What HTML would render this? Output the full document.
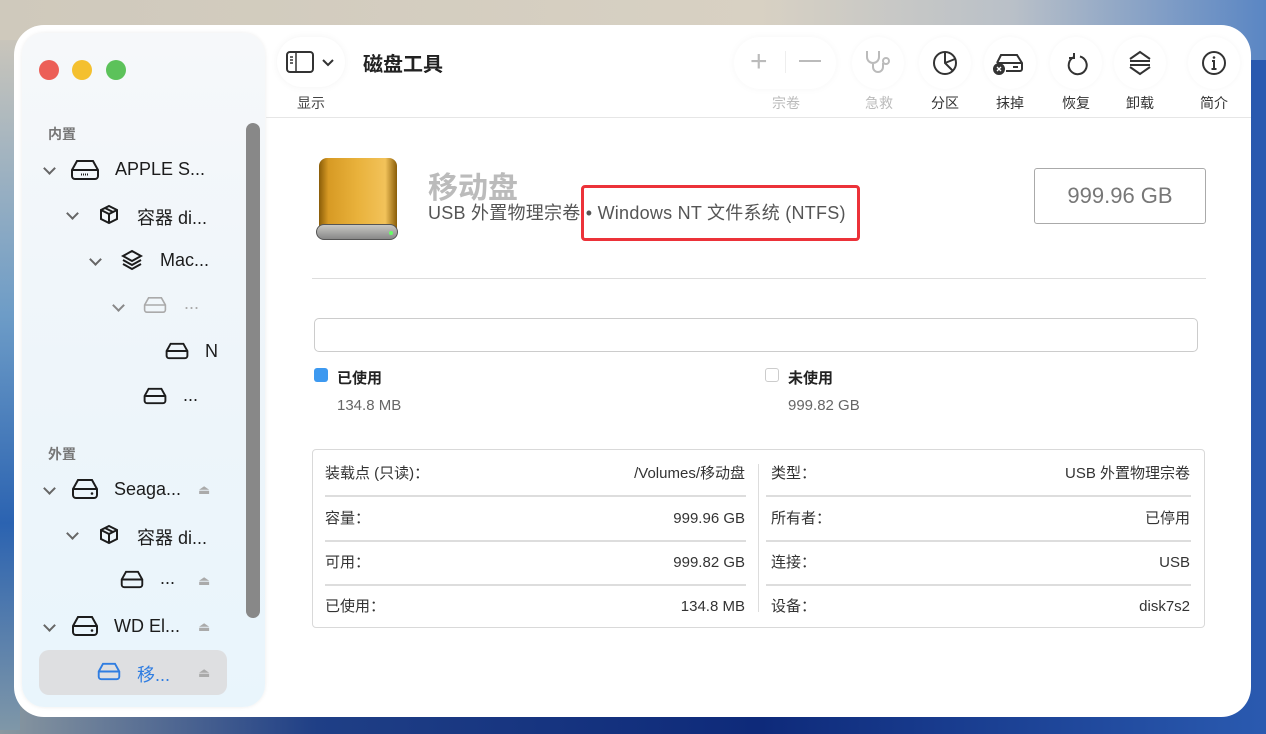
<!DOCTYPE html>
<html><head><meta charset="utf-8"><style>
*{margin:0;padding:0;box-sizing:border-box}
body{width:1266px;height:734px;overflow:hidden;position:relative;font-family:"Liberation Sans","Noto Sans CJK SC",sans-serif;
background:linear-gradient(90deg,#8a98a0 0%,#1f3f86 25%,#0e2a7a 60%,#2a5ab0 100%);}
.bgtop{position:absolute;left:0;top:0;width:1266px;height:60px;background:linear-gradient(90deg,#cfc9bc 0%,#d8d1c3 60%,#b9c0c8 80%,#5a86c4 100%)}
.bgleft{position:absolute;left:0;top:40px;width:20px;height:690px;background:linear-gradient(180deg,#c9c5bb 0%,#6d9cc7 40%,#2b63b1 70%,#7f97a8 100%)}
.win{position:absolute;left:14px;top:25px;width:1237px;height:692px;background:#fff;border-radius:30px;overflow:hidden}
.side{position:absolute;left:8px;top:8px;width:243px;height:674px;border-radius:22px;background:linear-gradient(180deg,#f6f8fa 0%,#eef5fa 50%,#e9f5fc 100%);box-shadow:0 0 4px rgba(0,0,0,.08)}
.dot{position:absolute;top:27px;width:20px;height:20px;border-radius:50%}
.abs{position:absolute}
.sec{position:absolute;font-size:14px;color:#777;font-weight:bold}
.row{position:absolute;font-size:18px;color:#1c1c1c;white-space:nowrap}
.chev{position:absolute;width:9px;height:9px;border-right:2px solid #666;border-bottom:2px solid #666;transform:rotate(45deg)}
.ej{position:absolute;color:#aaa;font-size:13px}
.tb{position:absolute;font-size:14px;color:#444;text-align:center;width:60px}
.circ{position:absolute;top:12px;width:52px;height:52px;border-radius:50%;background:#fff;box-shadow:0 0 6px rgba(0,0,0,.04)}
.info{position:absolute;left:298px;top:424px;width:893px;height:179px;border:1.5px solid #d9d9d9;border-radius:4px}
.cell{position:absolute;font-size:15px;color:#333;height:20px;line-height:20px;white-space:nowrap}
.hl{position:absolute;height:1.5px;background:#ddd}
</style></head><body>
<div class="bgtop"></div><div class="bgleft"></div>
<div class="win">
 <div class="side">
  <div class="dot" style="left:17px;background:#ec5f57"></div>
  <div class="dot" style="left:50px;background:#f4c02f"></div>
  <div class="dot" style="left:84px;background:#5cc25a"></div>
  <div class="abs" style="left:224px;top:90px;width:14px;height:495px;border-radius:7px;background:#888"></div>
  <div class="sec" style="left:26px;top:91px">内置</div>
  <div class="sec" style="left:26px;top:411px">外置</div>
  <div class="abs" style="left:17px;top:617px;width:188px;height:45px;border-radius:10px;background:#dedfe1"></div>
 </div>
 <div class="chev" style="left:31px;top:139px"></div>
 <svg class="abs" style="left:56px;top:134px" width="30" height="22" viewBox="0 0 30 22" fill="none" stroke="#1c1c1c" stroke-width="2"><path d="M2 11 L7 2 H23 L28 11 V17 a3 3 0 0 1 -3 3 H5 a3 3 0 0 1 -3 -3Z M2 11 H28"/><path d="M11 15.5 H19" stroke-dasharray="1 1"/></svg>
 <div class="row" style="left:101px;top:134px">APPLE S...</div>
 <div class="chev" style="left:54px;top:184px"></div>
 <svg class="abs" style="left:84px;top:179px" width="22" height="22" viewBox="0 0 22 22" fill="none" stroke="#1c1c1c" stroke-width="2"><path d="M11 2 L19 6 V15 L11 19 L3 15 V6Z M3 6 L11 10 L19 6 M11 10 V19 M7 4 L15 8"/></svg>
 <div class="row" style="left:123px;top:179px">容器 di...</div>
 <div class="chev" style="left:77px;top:230px"></div>
 <svg class="abs" style="left:107px;top:224px" width="22" height="24" viewBox="0 0 22 24" fill="none" stroke="#1c1c1c" stroke-width="2"><path d="M11 2 L20 7 L11 12 L2 7Z M2 11 L11 16 L20 11 M2 15 L11 20 L20 15"/></svg>
 <div class="row" style="left:146px;top:225px">Mac...</div>
 <div class="chev" style="left:100px;top:276px;border-color:#888"></div>
 <svg class="abs" style="left:129px;top:271px" width="24" height="18" viewBox="0 0 30 22" fill="none" stroke="#aaa" stroke-width="2"><path d="M2 11 L7 2 H23 L28 11 V17 a3 3 0 0 1 -3 3 H5 a3 3 0 0 1 -3 -3Z M2 11 H28"/></svg>
 <div class="row" style="left:170px;top:268px;color:#aaa">...</div>
 <svg class="abs" style="left:151px;top:317px" width="24" height="18" viewBox="0 0 30 22" fill="none" stroke="#1c1c1c" stroke-width="2.4"><path d="M2 11 L7 2 H23 L28 11 V17 a3 3 0 0 1 -3 3 H5 a3 3 0 0 1 -3 -3Z M2 11 H28"/></svg>
 <div class="row" style="left:191px;top:316px">N</div>
 <svg class="abs" style="left:129px;top:362px" width="24" height="18" viewBox="0 0 30 22" fill="none" stroke="#1c1c1c" stroke-width="2.4"><path d="M2 11 L7 2 H23 L28 11 V17 a3 3 0 0 1 -3 3 H5 a3 3 0 0 1 -3 -3Z M2 11 H28"/></svg>
 <div class="row" style="left:169px;top:360px">...</div>
 <div class="chev" style="left:31px;top:459px"></div>
 <svg class="abs" style="left:57px;top:453px" width="28" height="22" viewBox="0 0 28 22" fill="none" stroke="#1c1c1c" stroke-width="2"><path d="M2 11 L7 2 H21 L26 11 V17 a3 3 0 0 1 -3 3 H5 a3 3 0 0 1 -3 -3Z M2 11 H26"/><circle cx="21" cy="15.5" r="1.3" fill="#1c1c1c" stroke="none"/></svg>
 <div class="row" style="left:100px;top:454px">Seaga...</div>
 <div class="ej" style="left:184px;top:457px">⏏</div>
 <div class="chev" style="left:54px;top:504px"></div>
 <svg class="abs" style="left:84px;top:499px" width="22" height="22" viewBox="0 0 22 22" fill="none" stroke="#1c1c1c" stroke-width="2"><path d="M11 2 L19 6 V15 L11 19 L3 15 V6Z M3 6 L11 10 L19 6 M11 10 V19 M7 4 L15 8"/></svg>
 <div class="row" style="left:123px;top:499px">容器 di...</div>
 <svg class="abs" style="left:106px;top:545px" width="24" height="19" viewBox="0 0 28 22" fill="none" stroke="#1c1c1c" stroke-width="2.2"><path d="M2 11 L7 2 H21 L26 11 V17 a3 3 0 0 1 -3 3 H5 a3 3 0 0 1 -3 -3Z M2 11 H26"/></svg>
 <div class="row" style="left:146px;top:543px">...</div>
 <div class="ej" style="left:184px;top:548px">⏏</div>
 <div class="chev" style="left:31px;top:596px"></div>
 <svg class="abs" style="left:57px;top:590px" width="28" height="22" viewBox="0 0 28 22" fill="none" stroke="#1c1c1c" stroke-width="2"><path d="M2 11 L7 2 H21 L26 11 V17 a3 3 0 0 1 -3 3 H5 a3 3 0 0 1 -3 -3Z M2 11 H26"/><circle cx="21" cy="15.5" r="1.3" fill="#1c1c1c" stroke="none"/></svg>
 <div class="row" style="left:100px;top:591px">WD El...</div>
 <div class="ej" style="left:184px;top:594px">⏏</div>
 <svg class="abs" style="left:83px;top:637px" width="24" height="19" viewBox="0 0 28 22" fill="none" stroke="#2f7de1" stroke-width="2.2"><path d="M2 11 L7 2 H21 L26 11 V17 a3 3 0 0 1 -3 3 H5 a3 3 0 0 1 -3 -3Z M2 11 H26"/></svg>
 <div class="row" style="left:123px;top:636px;color:#2f7de1">移...</div>
 <div class="ej" style="left:184px;top:640px">⏏</div>

 <div class="abs" style="left:263px;top:12px;width:68px;height:50px;border-radius:25px;background:#fff;box-shadow:0 0 8px rgba(0,0,0,.05)"></div>
 <svg class="abs" style="left:272px;top:26px" width="52" height="22" viewBox="0 0 52 22" fill="none" stroke="#333" stroke-width="2"><rect x="1" y="1" width="26" height="20" rx="3"/><path d="M10 1 V21 M4 6 H7 M4 9 H7 M4 12 H7" stroke-width="1.5"/><path d="M37 9 L42 14 L47 9"/></svg>
 <div class="tb" style="left:267px;top:68px">显示</div>
 <div class="abs" style="left:349px;top:23px;font-size:20px;font-weight:bold;color:#222">磁盘工具</div>
 <div class="abs" style="left:720px;top:12px;width:102px;height:52px;border-radius:26px;background:#fff;box-shadow:0 0 8px rgba(0,0,0,.04)"></div>
 <div class="abs" style="left:736px;top:20px;font-size:30px;color:#bbb;font-weight:200">+</div>
 <div class="abs" style="left:771px;top:26px;width:1px;height:22px;background:#eee"></div>
 <div class="abs" style="left:785px;top:35px;width:22px;height:2px;background:#bbb"></div>
 <div class="tb" style="left:742px;top:68px;color:#bbb">宗卷</div>
 <div class="circ" style="left:838px"></div>
 <svg class="abs" style="left:850px;top:24px" width="30" height="28" viewBox="0 0 30 28" fill="none" stroke="#bbb" stroke-width="2"><path d="M3 2 V8 a6 6 0 0 0 12 0 V2 M9 14 V18 a5 5 0 0 0 10 0 V14"/><circle cx="22" cy="12" r="3"/></svg>
 <div class="tb" style="left:835px;top:68px;color:#bbb">急救</div>
 <div class="circ" style="left:905px"></div>
 <svg class="abs" style="left:918px;top:25px" width="26" height="26" viewBox="0 0 26 26" fill="none" stroke="#333" stroke-width="2"><circle cx="13" cy="13" r="11"/><path d="M13 2 V13 L21 21 M13 13 L23 9"/></svg>
 <div class="tb" style="left:901px;top:68px;color:#333">分区</div>
 <div class="circ" style="left:970px"></div>
 <svg class="abs" style="left:978px;top:27px" width="34" height="24" viewBox="0 0 34 24" fill="none" stroke="#333" stroke-width="2"><path d="M5 11 L9 3 H25 L30 11 V17 a2 2 0 0 1 -2 2 H14 M5 11 H30 M21 15 H26"/><circle cx="7" cy="17" r="5" fill="#333"/><path d="M5 15 L9 19 M9 15 L5 19" stroke="#fff" stroke-width="1.3"/></svg>
 <div class="tb" style="left:966px;top:68px;color:#333">抹掉</div>
 <div class="circ" style="left:1036px"></div>
 <svg class="abs" style="left:1051px;top:24px" width="24" height="28" viewBox="0 0 24 28" fill="none" stroke="#333" stroke-width="2"><path d="M9 6 a9 9 0 1 0 6 -0.5 M9 2 V7 H4" transform="translate(0,2)"/></svg>
 <div class="tb" style="left:1032px;top:68px;color:#333">恢复</div>
 <div class="circ" style="left:1100px"></div>
 <svg class="abs" style="left:1114px;top:25px" width="24" height="26" viewBox="0 0 24 26" fill="none" stroke="#333" stroke-width="2"><path d="M2 9 L12 2 L22 9 M2 11 H22 M2 15 H22 M2 17 L12 24 L22 17"/></svg>
 <div class="tb" style="left:1096px;top:68px;color:#333">卸载</div>
 <div class="circ" style="left:1174px"></div>
 <svg class="abs" style="left:1187px;top:25px" width="26" height="26" viewBox="0 0 26 26" fill="none" stroke="#333" stroke-width="2"><circle cx="13" cy="13" r="11"/><path d="M11 11 H13 V19 M10.5 19 H15.5"/><circle cx="13" cy="7.5" r="1.3" fill="#333" stroke="none"/></svg>
 <div class="tb" style="left:1170px;top:68px;color:#333">简介</div>
 <div class="abs" style="left:252px;top:92px;width:985px;height:1px;background:#e6e6e6"></div>

 <div class="abs" style="left:305px;top:133px;width:78px;height:80px;border-radius:8px 8px 6px 6px;background:linear-gradient(90deg,#8a5d08 0%,#d79a24 12%,#e9b23c 50%,#f2c25a 85%,#8a5d08 100%)"></div>
 <div class="abs" style="left:302px;top:199px;width:82px;height:16px;border-radius:8px;background:linear-gradient(180deg,#c8c8c4,#888);border:1px solid #555"></div>
 <div class="abs" style="left:375px;top:206px;width:4px;height:4px;border-radius:50%;background:#6f6"></div>
 <div class="abs" style="left:414px;top:138px;font-size:30px;font-weight:bold;color:#bbb">移动盘</div>
 <div class="abs" style="left:414px;top:174px;font-size:18px;color:#555;white-space:nowrap;letter-spacing:0.25px">USB 外置物理宗卷 • Windows NT 文件系统 (NTFS)</div>
 <div class="abs" style="left:567px;top:160px;width:279px;height:56px;border:3.5px solid #ec3239;border-radius:4px"></div>
 <div class="abs" style="left:1020px;top:143px;width:172px;height:56px;border:1.5px solid #aaa;border-radius:3px;font-size:22px;color:#777;text-align:center;line-height:53px">999.96 GB</div>
 <div class="abs" style="left:298px;top:253px;width:894px;height:1px;background:#ddd"></div>
 <div class="abs" style="left:300px;top:293px;width:884px;height:34px;border:1.5px solid #ccc;border-radius:5px"></div>
 <div class="abs" style="left:300px;top:343px;width:14px;height:14px;border-radius:3px;background:#3d99f0"></div>
 <div class="abs" style="left:323px;top:342px;font-size:15px;font-weight:bold;color:#222">已使用</div>
 <div class="abs" style="left:323px;top:372px;font-size:15px;color:#666">134.8 MB</div>
 <div class="abs" style="left:751px;top:343px;width:14px;height:14px;border-radius:3px;border:1px solid #ccc"></div>
 <div class="abs" style="left:774px;top:342px;font-size:15px;font-weight:bold;color:#222">未使用</div>
 <div class="abs" style="left:774px;top:372px;font-size:15px;color:#666">999.82 GB</div>

 <div class="info">
  <div class="abs" style="left:445px;top:14px;width:1px;height:148px;background:#ddd"></div>
  <div class="hl" style="left:12px;top:45px;width:421px"></div><div class="hl" style="left:453px;top:45px;width:425px"></div>
  <div class="hl" style="left:12px;top:90px;width:421px"></div><div class="hl" style="left:453px;top:90px;width:425px"></div>
  <div class="hl" style="left:12px;top:134px;width:421px"></div><div class="hl" style="left:453px;top:134px;width:425px"></div>
  <div class="cell" style="left:12px;top:14px">装载点 (只读)：</div><div class="cell" style="right:459px;top:14px">/Volumes/移动盘</div>
  <div class="cell" style="left:458px;top:14px">类型：</div><div class="cell" style="right:14px;top:14px">USB 外置物理宗卷</div>
  <div class="cell" style="left:12px;top:59px">容量：</div><div class="cell" style="right:459px;top:59px">999.96 GB</div>
  <div class="cell" style="left:458px;top:59px">所有者：</div><div class="cell" style="right:14px;top:59px">已停用</div>
  <div class="cell" style="left:12px;top:103px">可用：</div><div class="cell" style="right:459px;top:103px">999.82 GB</div>
  <div class="cell" style="left:458px;top:103px">连接：</div><div class="cell" style="right:14px;top:103px">USB</div>
  <div class="cell" style="left:12px;top:147px">已使用：</div><div class="cell" style="right:459px;top:147px">134.8 MB</div>
  <div class="cell" style="left:458px;top:147px">设备：</div><div class="cell" style="right:14px;top:147px">disk7s2</div>
 </div>
</div>
</body></html>
